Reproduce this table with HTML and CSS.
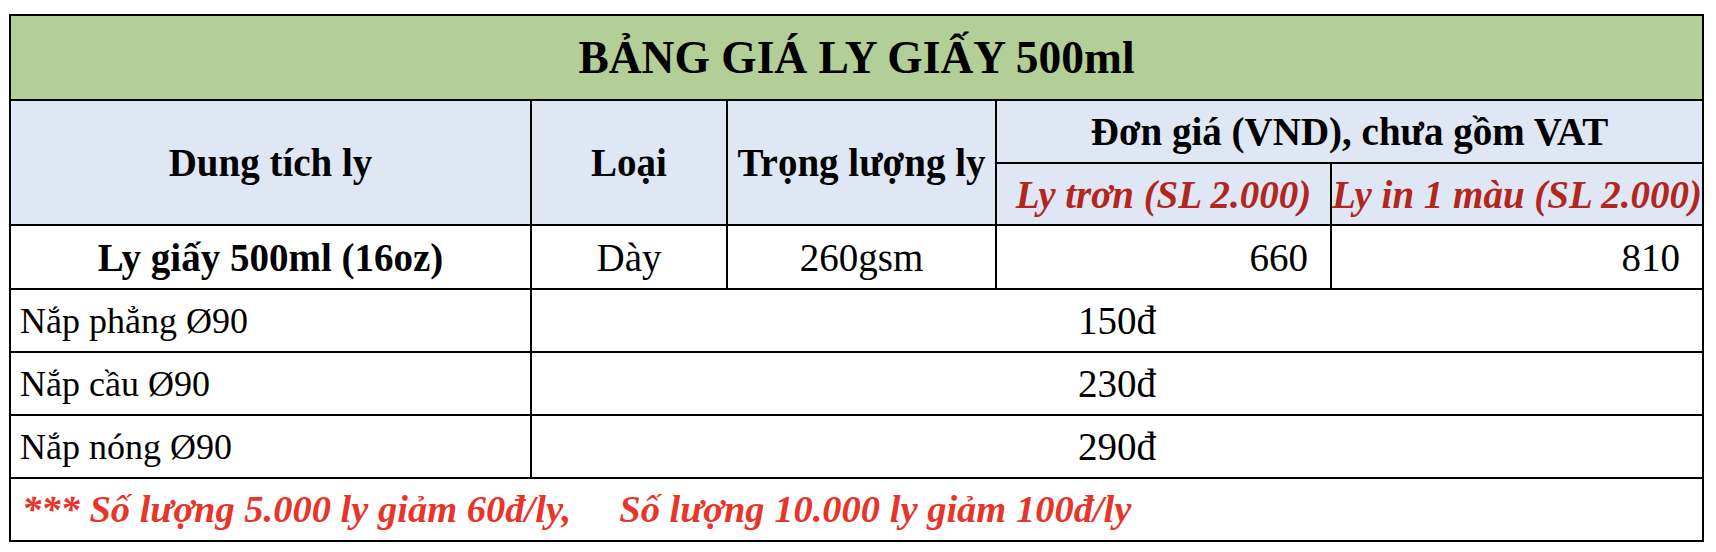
FILE: index.html
```html
<!DOCTYPE html>
<html lang="vi">
<head>
<meta charset="utf-8">
<title>Bảng giá ly giấy 500ml</title>
<link rel="stylesheet" href="styles.css">
</head>
<body>
<div class="page">
  <div class="sheet">
    <div class="cell title full">BẢNG GIÁ LY GIẤY 500ml</div>

    <div class="cell head bold rspan">Dung tích ly</div>
    <div class="cell head bold rspan">Loại</div>
    <div class="cell head bold rspan">Trọng lượng ly</div>
    <div class="cell head bold cspan2">Đơn giá (VND), chưa gồm VAT</div>
    <div class="cell head sub">Ly trơn (SL 2.000)</div>
    <div class="cell head sub">Ly in 1 màu (SL 2.000)</div>

    <div class="cell bold">Ly giấy 500ml (16oz)</div>
    <div class="cell">Dày</div>
    <div class="cell">260gsm</div>
    <div class="cell right">660</div>
    <div class="cell right">810</div>

    <div class="cell left lid">Nắp phẳng Ø90</div>
    <div class="cell cspan4">150đ</div>

    <div class="cell left lid">Nắp cầu Ø90</div>
    <div class="cell cspan4">230đ</div>

    <div class="cell left lid">Nắp nóng Ø90</div>
    <div class="cell cspan4">290đ</div>

    <div class="cell note full left">
      <span>*** Số lượng 5.000 ly giảm 60đ/ly,</span>
      <span class="note-second">Số lượng 10.000 ly giảm 100đ/ly</span>
    </div>
  </div>
</div>
</body>
</html>
```

FILE: styles.css
```css
html, body {
  margin: 0;
  padding: 0;
  background: #ffffff;
}

.page {
  padding: 14px 0 0 9px;
}

.sheet {
  display: inline-grid;
  grid-template-columns: 519px 194px 267px 333px 370px;
  grid-template-rows: 83px 61px 60px 62px 61px 61px 61px 61px;
  gap: 2px;
  padding: 2px;
  background: #000000;
  font-family: "Liberation Serif", "Times New Roman", serif;
  font-size: 39px;
  color: #000000;
}

.cell {
  background: #ffffff;
  display: flex;
  align-items: center;
  justify-content: center;
  white-space: nowrap;
  overflow: visible;
  line-height: 1;
}

.full {
  grid-column: 1 / -1;
}

.rspan {
  grid-row: span 2;
}

.cspan2 {
  grid-column: span 2;
}

.cspan4 {
  grid-column: span 4;
}

.title {
  background: #b1cf96;
  font-weight: bold;
  font-size: 45.5px;
}

.head {
  background: #dfe7f4;
}

.bold {
  font-weight: bold;
}

.sub {
  font-weight: bold;
  font-style: italic;
  color: #b3261e;
}

.right {
  justify-content: flex-end;
  padding-right: 22px;
}

.left {
  justify-content: flex-start;
  padding-left: 9px;
}

.lid {
  font-size: 36px;
}

.note {
  color: #e8352a;
  font-weight: bold;
  font-style: italic;
  font-size: 38.5px;
  padding-left: 11px;
}

.note-second {
  margin-left: 48px;
}
```
